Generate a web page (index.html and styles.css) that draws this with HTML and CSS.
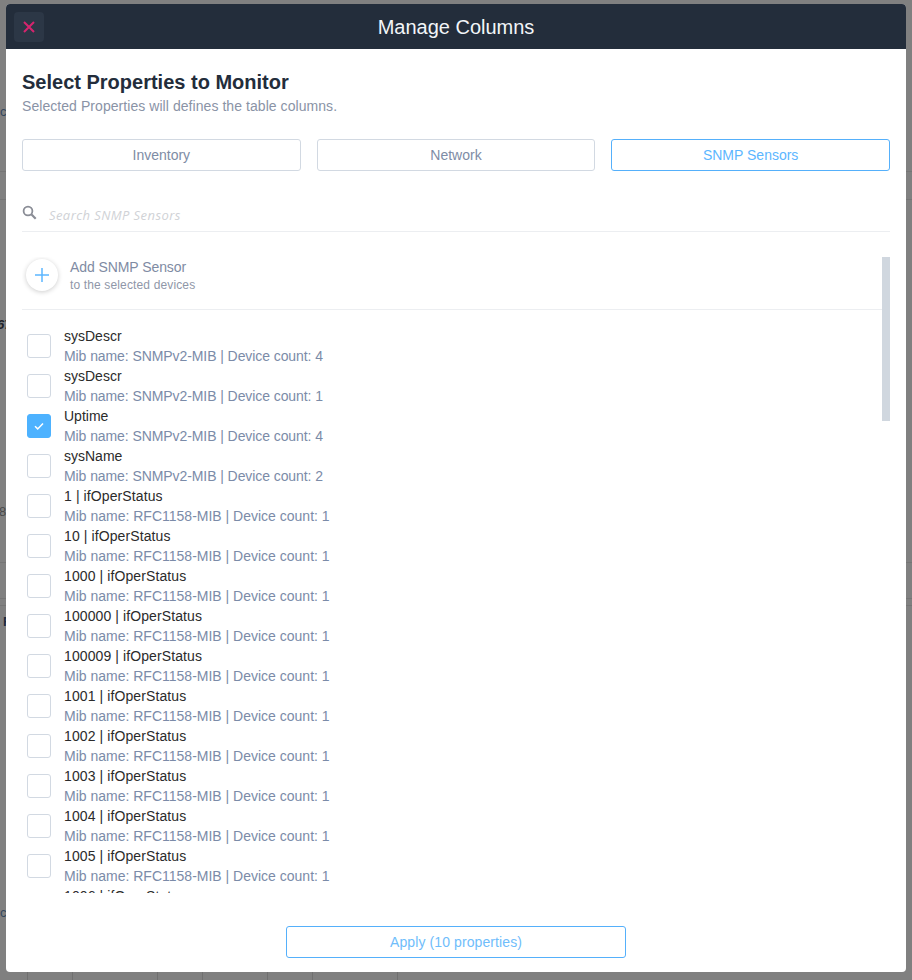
FILE: index.html
```html
<!DOCTYPE html>
<html lang="en">
<head>
<meta charset="utf-8">
<title>Manage Columns</title>
<link rel="stylesheet" href="styles.css">
</head>
<body>
<div class="backdrop" aria-hidden="true">
  <i class="rule rule-a"></i><i class="rule rule-b"></i><i class="rule rule-c"></i><i class="rule rule-d"></i><i class="rule rule-e"></i>
  <span class="peek peek-a">c</span><span class="peek peek-b">67</span><span class="peek peek-c">8</span><span class="peek peek-d">F</span><span class="peek peek-e">c</span>
  <div class="cells"><i></i><i></i><i></i><i></i><i></i><i></i><i></i></div>
</div>
<div class="modal">
  <header class="modal-head">
    <button class="close" type="button" aria-label="Close">
      <svg width="14" height="14" viewBox="0 0 14 14"><path d="M2 2l10 10M12 2L2 12" fill="none" stroke="#d6246e" stroke-width="2"/></svg>
    </button>
    <h1 class="modal-title">Manage Columns</h1>
  </header>
  <div class="modal-body">
    <h2 class="heading">Select Properties to Monitor</h2>
    <p class="sub">Selected Properties will defines the table columns.</p>
    <div class="tabs">
      <button class="tab" type="button">Inventory</button>
      <button class="tab" type="button">Network</button>
      <button class="tab tab-active" type="button">SNMP Sensors</button>
    </div>
    <div class="search">
      <svg width="15" height="15" viewBox="0 0 15 15"><circle cx="6" cy="6" r="4.4" fill="none" stroke="#8a8d96" stroke-width="1.8"/><path d="M9.3 9.3l4.4 4.4" stroke="#8a8d96" stroke-width="2.2" fill="none"/></svg>
      <span class="search-ph">Search SNMP Sensors</span>
    </div>
    <div class="scroller">
      <div class="thumb"></div>
      <div class="add">
        <span class="add-circle">
          <svg width="14" height="14" viewBox="0 0 14 14"><path d="M7 0v14M0 7h14" stroke="#5cb6ff" stroke-width="1.5" fill="none"/></svg>
        </span>
        <div>
          <div class="add-title">Add SNMP Sensor</div>
          <div class="add-sub">to the selected devices</div>
        </div>
      </div>
      <ul class="list">
        <li class="row"><span class="check"></span><div><div class="name">sysDescr</div><div class="meta meta-tight">Mib name: SNMPv2-MIB | Device count: 4</div></div></li>
        <li class="row"><span class="check"></span><div><div class="name">sysDescr</div><div class="meta meta-tight">Mib name: SNMPv2-MIB | Device count: 1</div></div></li>
        <li class="row"><span class="check check-on"><svg width="12" height="12" viewBox="0 0 12 12"><path d="M2 6.3l2.7 2.6L10 3.4" fill="none" stroke="#fff" stroke-width="1.5"/></svg></span><div><div class="name">Uptime</div><div class="meta meta-tight">Mib name: SNMPv2-MIB | Device count: 4</div></div></li>
        <li class="row"><span class="check"></span><div><div class="name">sysName</div><div class="meta meta-tight">Mib name: SNMPv2-MIB | Device count: 2</div></div></li>
        <li class="row"><span class="check"></span><div><div class="name name-num">1 | ifOperStatus</div><div class="meta">Mib name: RFC1158-MIB | Device count: 1</div></div></li>
        <li class="row"><span class="check"></span><div><div class="name name-num">10 | ifOperStatus</div><div class="meta">Mib name: RFC1158-MIB | Device count: 1</div></div></li>
        <li class="row"><span class="check"></span><div><div class="name name-num">1000 | ifOperStatus</div><div class="meta">Mib name: RFC1158-MIB | Device count: 1</div></div></li>
        <li class="row"><span class="check"></span><div><div class="name name-num">100000 | ifOperStatus</div><div class="meta">Mib name: RFC1158-MIB | Device count: 1</div></div></li>
        <li class="row"><span class="check"></span><div><div class="name name-num">100009 | ifOperStatus</div><div class="meta">Mib name: RFC1158-MIB | Device count: 1</div></div></li>
        <li class="row"><span class="check"></span><div><div class="name name-num">1001 | ifOperStatus</div><div class="meta">Mib name: RFC1158-MIB | Device count: 1</div></div></li>
        <li class="row"><span class="check"></span><div><div class="name name-num">1002 | ifOperStatus</div><div class="meta">Mib name: RFC1158-MIB | Device count: 1</div></div></li>
        <li class="row"><span class="check"></span><div><div class="name name-num">1003 | ifOperStatus</div><div class="meta">Mib name: RFC1158-MIB | Device count: 1</div></div></li>
        <li class="row"><span class="check"></span><div><div class="name name-num">1004 | ifOperStatus</div><div class="meta">Mib name: RFC1158-MIB | Device count: 1</div></div></li>
        <li class="row"><span class="check"></span><div><div class="name name-num">1005 | ifOperStatus</div><div class="meta">Mib name: RFC1158-MIB | Device count: 1</div></div></li>
        <li class="row"><span class="check"></span><div><div class="name name-num">1006 | ifOperStatus</div><div class="meta">Mib name: RFC1158-MIB | Device count: 1</div></div></li>
      </ul>
    </div>
    <div class="foot"><button class="apply" type="button">Apply (10 properties)</button></div>
  </div>
</div>
</body>
</html>
```
FILE: styles.css
```css
* { box-sizing: border-box; }
html, body { margin: 0; height: 100%; }
body {
  height: 980px;
  overflow: hidden;
  background: #808080;
  font-family: "Liberation Sans", Arial, sans-serif;
  padding: 4px 6px 8px;
  position: relative;
}
.backdrop { position: absolute; inset: 0; overflow: hidden; }
.rule { position: absolute; left: 0; right: 0; height: 1px; background: #757575; }
.rule-a { top: 171px; }
.rule-b { top: 199px; }
.rule-c { top: 562px; }
.rule-d { top: 598px; }
.rule-e { top: 605px; }
.peek { position: absolute; left: 0; font-size: 13px; line-height: 14px; color: #3a4450; }
.peek-a { left: 0; top: 105px; color: #33465c; }
.peek-b { left: -3px; top: 318px; font-weight: 700; font-style: italic; color: #1d2228; }
.peek-c { left: -1px; top: 505px; color: #4a4a4a; }
.peek-d { left: 3px; top: 615px; font-weight: 700; color: #1c2a3c; }
.peek-e { left: 0; top: 906px; color: #33465c; }
.cells { position: absolute; left: 0; right: 0; top: 972px; height: 8px; display: flex; }
.cells i { width: 45px; border-right: 1px solid #707070; }
.cells i:first-child { width: 28px; }
.cells i:nth-child(2) { width: 45px; }
.cells i:nth-child(3) { width: 85px; }
.cells i:nth-child(4) { width: 45px; }
.cells i:nth-child(5) { width: 65px; }
.cells i:nth-child(6) { width: 45px; }
.cells i:nth-child(7) { width: 85px; }

.modal {
  position: relative;
  width: 900px;
  height: 968px;
  background: #fff;
  border-radius: 4px;
  overflow: hidden;
}
.modal-head {
  height: 45px;
  background: #232d3b;
  display: flex;
  align-items: center;
  justify-content: center;
  position: relative;
}
.close {
  position: absolute;
  left: 8px;
  top: 8px;
  width: 30px;
  height: 30px;
  padding: 0;
  border: 0;
  border-radius: 4px;
  background: #2c3746;
  display: flex;
  align-items: center;
  justify-content: center;
}
.modal-title { margin: 2px 0 0; font-size: 20px; line-height: 43px; font-weight: 400; color: #f2f5f8; }
.modal-body { padding: 0 16px; }
.heading { margin: 21px 0 0; font-size: 20px; line-height: 24px; font-weight: 700; color: #232d3b; }
.sub { margin: 3px 0 0; font-size: 14px; line-height: 18px; letter-spacing: .06px; color: #8a93a6; }
.tabs { display: grid; grid-template-columns: repeat(3, 1fr); gap: 16px; margin-top: 24px; }
.tab {
  height: 32px;
  background: #fff;
  border: 1px solid #d2d9e2;
  border-radius: 3px;
  font: 14px "Liberation Sans", Arial, sans-serif;
  color: #7e8ca5;
  padding: 0;
}
.tab-active { border-color: #55b0fb; color: #5cb6ff; }
.search {
  height: 61px;
  border-bottom: 1px solid #eceef1;
  display: flex;
  align-items: flex-end;
  gap: 12px;
  padding-bottom: 7px;
}
.search svg { margin-bottom: 4px; flex: none; }
.search-ph { font: italic 13px "Open Sans", sans-serif; line-height: 18px; letter-spacing: .42px; color: #d0d2d6; }

.scroller { position: relative; height: 636px; margin-top: 25px; overflow: hidden; }
.thumb { position: absolute; right: 0; top: 0; width: 8px; height: 164px; background: #d0d7df; }
.add {
  height: 53px;
  margin-right: 8px;
  border-bottom: 1px solid #eceef1;
  display: flex;
  align-items: flex-start;
  gap: 12px;
  padding-left: 4px;
}
.add-circle {
  width: 32px;
  height: 32px;
  margin-top: 2px;
  border-radius: 50%;
  background: #fff;
  box-shadow: 0 1px 5px rgba(0, 0, 0, .2);
  display: flex;
  align-items: center;
  justify-content: center;
  flex: none;
}
.add-title { margin-top: 2px; font-size: 14px; line-height: 16px; letter-spacing: -.08px; color: #808ba3; }
.add-sub { margin-top: 3px; font-size: 12px; line-height: 14px; letter-spacing: .14px; color: #8f97a8; }
.list { list-style: none; margin: 16px 0 0; padding: 0; }
.row { height: 40px; display: flex; align-items: flex-start; gap: 13px; padding-left: 5px; }
.check {
  width: 24px;
  height: 24px;
  margin-top: 8px;
  background: #fff;
  border: 1px solid #d2d9e2;
  border-radius: 3px;
  display: flex;
  align-items: center;
  justify-content: center;
  flex: none;
}
.check-on { background: #4db2ff; border-color: #4db2ff; }
.name { font-size: 14px; line-height: 20px; color: #2b2b2b; }
.name-num { letter-spacing: .1px; }
.meta { font-size: 14px; line-height: 20px; color: #7b8ba8; }
.meta-tight { letter-spacing: -.08px; }
.foot { display: flex; justify-content: center; padding-top: 33px; }
.apply {
  width: 340px;
  height: 32px;
  background: #fff;
  border: 1px solid #55b0fb;
  border-radius: 3px;
  padding: 0;
  font: 14px "Liberation Sans", Arial, sans-serif;
  letter-spacing: .1px;
  color: #6fbdfb;
}
```
